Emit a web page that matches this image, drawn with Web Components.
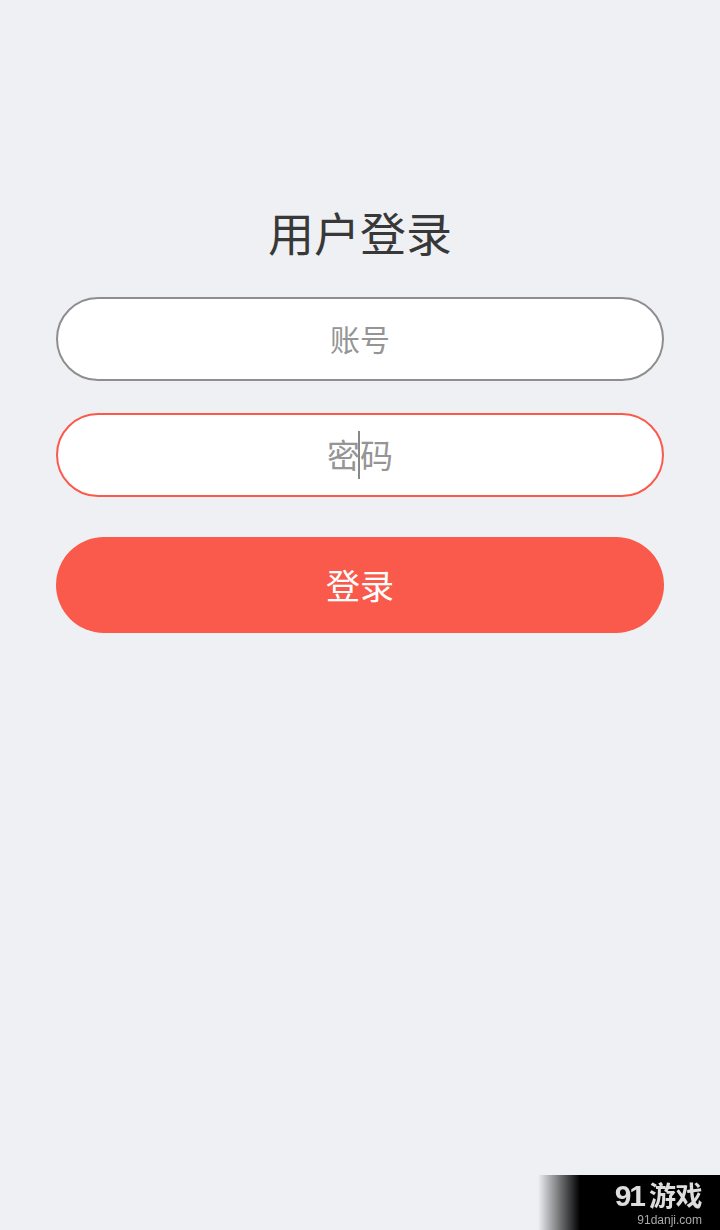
<!DOCTYPE html>
<html lang="zh-CN">
<head>
<meta charset="utf-8">
<title>用户登录</title>
<style>
  html, body { margin: 0; height: 100%; }
  body { background: #eef0f4; font-family: "Liberation Sans", "Noto Sans CJK SC", sans-serif; }
</style>
</head>
<body>
<login-page>
  <span slot="title">用户登录</span>
  <login-field placeholder="账号"></login-field>
  <login-field placeholder="密码" focused></login-field>
  <login-button>登录</login-button>
</login-page>
<site-mark></site-mark>

<script>
class LoginPage extends HTMLElement {
  constructor() {
    super();
    this.attachShadow({ mode: "open" });
    this.shadowRoot.innerHTML = `
      <style>
        :host {
          display: flex;
          flex-direction: column;
          padding: 205px 56px 0;
          box-sizing: border-box;
        }
        .title {
          height: 60px;
          line-height: 60px;
          margin-bottom: 32px;
          text-align: center;
          font-size: 46px;
          color: #383838;
        }
        .form {
          display: flex;
          flex-direction: column;
          gap: 32px;
        }
      </style>
      <div class="title"><slot name="title"></slot></div>
      <div class="form"><slot></slot></div>
    `;
  }
}

class LoginField extends HTMLElement {
  constructor() {
    super();
    this.attachShadow({ mode: "open" });
  }

  connectedCallback() {
    this.shadowRoot.innerHTML = `
      <style>
        :host {
          display: flex;
          align-items: center;
          justify-content: center;
          height: 84px;
          box-sizing: border-box;
          border: 2px solid #8e8e8e;
          border-radius: 42px;
          background: #fff;
          color: #959595;
          font-size: 30px;
        }
        :host([focused]) {
          border-color: #fa5a4b;
          font-size: 33px;
        }
        .text {
          position: relative;
          line-height: 48px;
        }
        .label {
          display: block;
          transform: translateY(2px);
        }
        .caret {
          display: none;
          position: absolute;
          left: 50%;
          top: 0;
          width: 2px;
          height: 48px;
          margin-left: -2px;
          background: #888;
        }
        :host([focused]) .caret {
          display: block;
        }
      </style>
      <span class="text"><span class="label">${this.getAttribute("placeholder")}</span><span class="caret"></span></span>
    `;
  }
}

class LoginButton extends HTMLElement {
  constructor() {
    super();
    this.attachShadow({ mode: "open" });
    this.shadowRoot.innerHTML = `
      <style>
        :host {
          display: flex;
          align-items: center;
          justify-content: center;
          height: 96px;
          margin-top: 8px;
          padding-bottom: 2px;
          box-sizing: border-box;
          border-radius: 48px;
          background: #fa5a4b;
          color: #fff;
          font-size: 34px;
        }
      </style>
      <slot></slot>
    `;
  }
}

class SiteMark extends HTMLElement {
  constructor() {
    super();
    this.attachShadow({ mode: "open" });
    this.shadowRoot.innerHTML = `
      <style>
        :host {
          position: fixed;
          right: 0;
          bottom: 0;
          width: 182px;
          height: 55px;
          box-sizing: border-box;
          padding: 7px 18px 0 0;
          display: flex;
          flex-direction: column;
          align-items: flex-end;
          background: linear-gradient(to right, rgba(0,0,0,0) 0, #000 42px);
          color: #ddd;
        }
        .name {
          line-height: 27px;
          font-size: 27px;
          font-weight: 700;
          font-family: "Liberation Sans", "Noto Sans CJK SC", sans-serif;
          white-space: nowrap;
          letter-spacing: -0.5px;
        }
        .nine {
          font-size: 30px;
          letter-spacing: -2px;
          margin-right: 5px;
        }
        .url {
          font-size: 12px;
          line-height: 14px;
          margin-top: 2px;
          color: #aaa;
          font-family: "Liberation Sans", sans-serif;
        }
      </style>
      <div class="name"><span class="nine">91</span>游戏</div>
      <div class="url">91danji.com</div>
    `;
  }
}

customElements.define("login-page", LoginPage);
customElements.define("login-field", LoginField);
customElements.define("login-button", LoginButton);
customElements.define("site-mark", SiteMark);
</script>
</body>
</html>
